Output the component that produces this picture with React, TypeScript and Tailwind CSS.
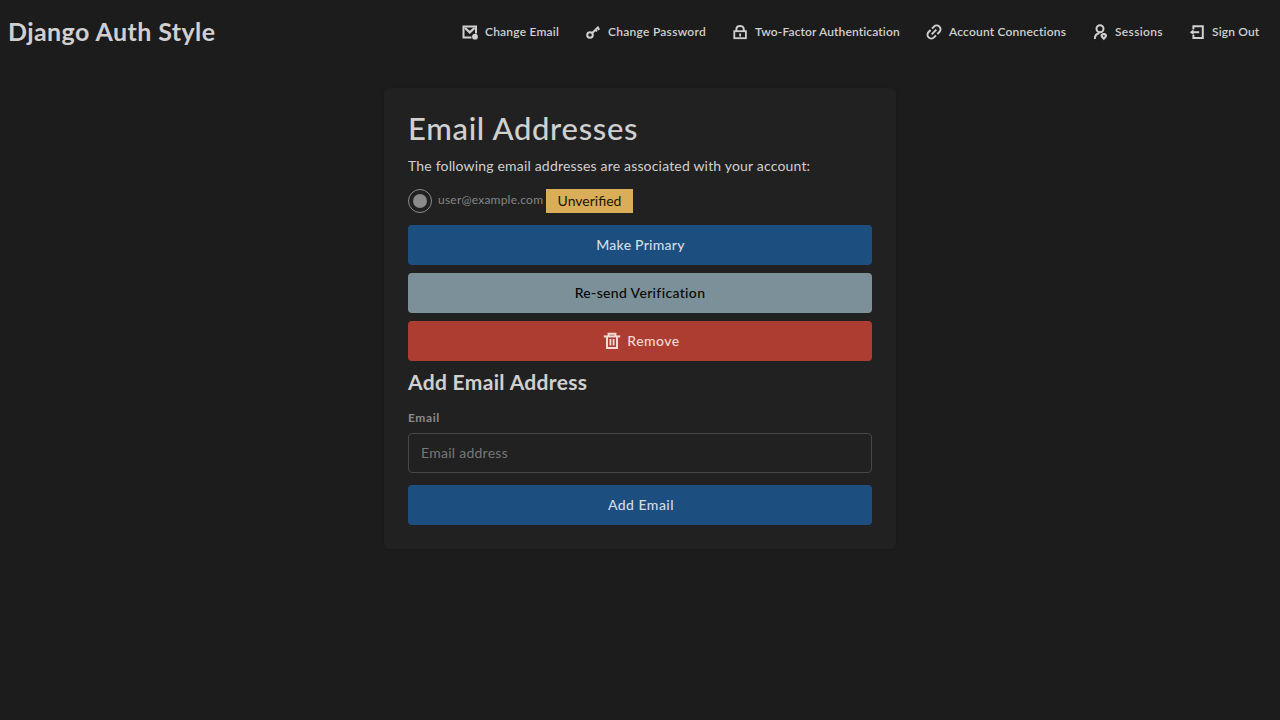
import type { ReactNode } from "react";

function Icon({ children }: { children: ReactNode }) {
  return (
    <svg
      className="h-[18px] w-[18px] shrink-0"
      viewBox="0 0 18 18"
      fill="none"
      stroke="currentColor"
      strokeWidth="2"
    >
      {children}
    </svg>
  );
}

const MailIcon = () => (
  <Icon>
    <path d="M10.5 14.5H2.5V3.5H15V10.5" />
    <path d="M4 5L8.75 9.4L13.5 5" strokeWidth="2.3" />
    <circle cx="14" cy="13.7" r="2.9" fill="currentColor" stroke="none" />
  </Icon>
);

const KeyIcon = () => (
  <Icon>
    <circle cx="6" cy="12" r="2.8" strokeWidth="2" />
    <path d="M8 10.2L14.6 3.6M11.2 6.6L13 8.4M13.2 4.6L15.4 6.8" strokeWidth="2" />
  </Icon>
);

const LockIcon = () => (
  <Icon>
    <rect x="3.3" y="8.2" width="11.6" height="7" strokeWidth="1.8" />
    <path d="M5.4 8.3V6.4C5.4 1.9 12.8 1.9 12.8 6.4V8.3" />
    <path d="M9.1 10.4V13.4" strokeWidth="1.8" />
  </Icon>
);

const LinkIcon = () => (
  <Icon>
    <g transform="rotate(-45 9 9)">
      <path d="M8 12.8H5.2A3.8 3.8 0 0 1 5.2 5.2H8" />
      <path d="M10 5.2H12.8A3.8 3.8 0 0 1 12.8 12.8H10" />
      <path d="M5.7 9H12.3" />
    </g>
  </Icon>
);

const SessionsIcon = () => (
  <Icon>
    <circle cx="9" cy="5.7" r="3.5" />
    <path d="M3.8 16C3.8 12.4 5.4 10.6 8.4 10.2" />
    <path
      d="M12.8 17.2L10.3 14.4C8.6 12.3 10.1 10 12.8 10S17 12.3 15.3 14.4ZM12.8 12A0.9 0.9 0 1 0 12.8 13.8A0.9 0.9 0 1 0 12.8 12Z"
      fill="currentColor"
      fillRule="evenodd"
      stroke="none"
    />
  </Icon>
);

const SignOutIcon = () => (
  <Icon>
    <path d="M5.4 6.2V3.2H14.8V15.1H5.4V12" />
    <path d="M11.2 9.2H4" />
    <path d="M1.8 9.2L5.6 6.3V12.1Z" fill="currentColor" stroke="none" />
  </Icon>
);

const TrashIcon = () => (
  <Icon>
    <path d="M0.8 4.4H17.2" />
    <path d="M5.6 5V1.8H12.4V5" />
    <path d="M4 5V15.9H14V5" />
    <path d="M7.4 7V13.4M10.6 7V13.4" strokeWidth="1.8" />
  </Icon>
);

const links = [
  { label: "Change Email", icon: <MailIcon />, text: "w-[74px] tracking-[0.2px]" },
  { label: "Change Password", icon: <KeyIcon />, text: "w-[98px] tracking-[0.27px]" },
  { label: "Two-Factor Authentication", icon: <LockIcon />, text: "w-[145px] tracking-[0.13px]" },
  { label: "Account Connections", icon: <LinkIcon />, text: "w-[117px] tracking-[0.19px]" },
  { label: "Sessions", icon: <SessionsIcon />, text: "w-12 tracking-[0.35px]" },
  { label: "Sign Out", icon: <SignOutIcon />, text: "w-12 tracking-[0.15px]" },
];

const button =
  "flex h-10 w-full items-center justify-center rounded text-sm";

export default function App() {
  return (
    <div className="min-h-screen bg-[#1c1c1c] font-['Lato',sans-serif] text-[#d0d0d0]">
      <header className="flex h-16 items-center justify-between pr-5 pl-2">
        <a className="pb-0.5 text-[25px] leading-8 font-bold tracking-[0.42px]">Django Auth Style</a>
        <nav className="flex gap-[25px]">
          {links.map((link) => (
            <a key={link.label} className="flex items-center gap-1.5 text-xs font-semibold whitespace-nowrap">
              {link.icon}
              <span className={link.text}>{link.label}</span>
            </a>
          ))}
        </nav>
      </header>

      <main className="mx-auto mt-6 h-[461px] w-lg rounded-md bg-[#212121] p-6 shadow">
        <h1 className="h-9 text-[31px] leading-[33px] font-medium tracking-[0.68px]">Email Addresses</h1>
        <p className="mt-2 text-sm tracking-[0.18px]">
          The following email addresses are associated with your account:
        </p>

        <div className="mt-[13px] flex h-6 items-center">
          <span className="flex size-6 items-center justify-center rounded-full border border-[#8a8a8a]">
            <span className="size-3.5 rounded-full bg-[#8a8a8a]" />
          </span>
          <span className="ml-1.5 w-[108px] pb-0.5 text-xs tracking-[0.22px] text-[#858585]">
            user@example.com
          </span>
          <span className="flex h-6 w-[87px] items-center justify-center bg-[#daae59] text-sm text-[#1c1608]">
            Unverified
          </span>
        </div>

        <div className="mt-3 flex flex-col gap-2">
          <button className={`${button} bg-[#1c4f80] pl-px font-medium tracking-[0.26px] text-[#d2dce6]`}>
            Make Primary
          </button>
          <button className={`${button} bg-[#7b9098] font-medium tracking-[0.34px] text-[#060809]`}>
            Re-send Verification
          </button>
          <button
            className={`${button} gap-1.5 bg-[#ad3d31] pl-[3px] font-medium tracking-[0.45px] text-[#f2d9d6]`}
          >
            <TrashIcon />
            Remove
          </button>
        </div>

        <h2 className="mt-[7px] text-[21px] leading-7 font-bold tracking-[0.33px]">Add Email Address</h2>
        <label className="mt-3.5 block text-xs leading-4 font-bold tracking-[0.6px] text-[#8a8a8a]">
          Email
        </label>
        <input
          className="mt-[7px] block h-10 w-full rounded border border-[#474747] bg-transparent px-3 pb-0.5 text-sm tracking-[0.26px] placeholder:text-[#777777]"
          placeholder="Email address"
        />
        <button className={`${button} mt-3 bg-[#1c4f80] pl-0.5 font-medium tracking-[0.48px] text-[#d2dce6]`}>
          Add Email
        </button>
      </main>
    </div>
  );
}
